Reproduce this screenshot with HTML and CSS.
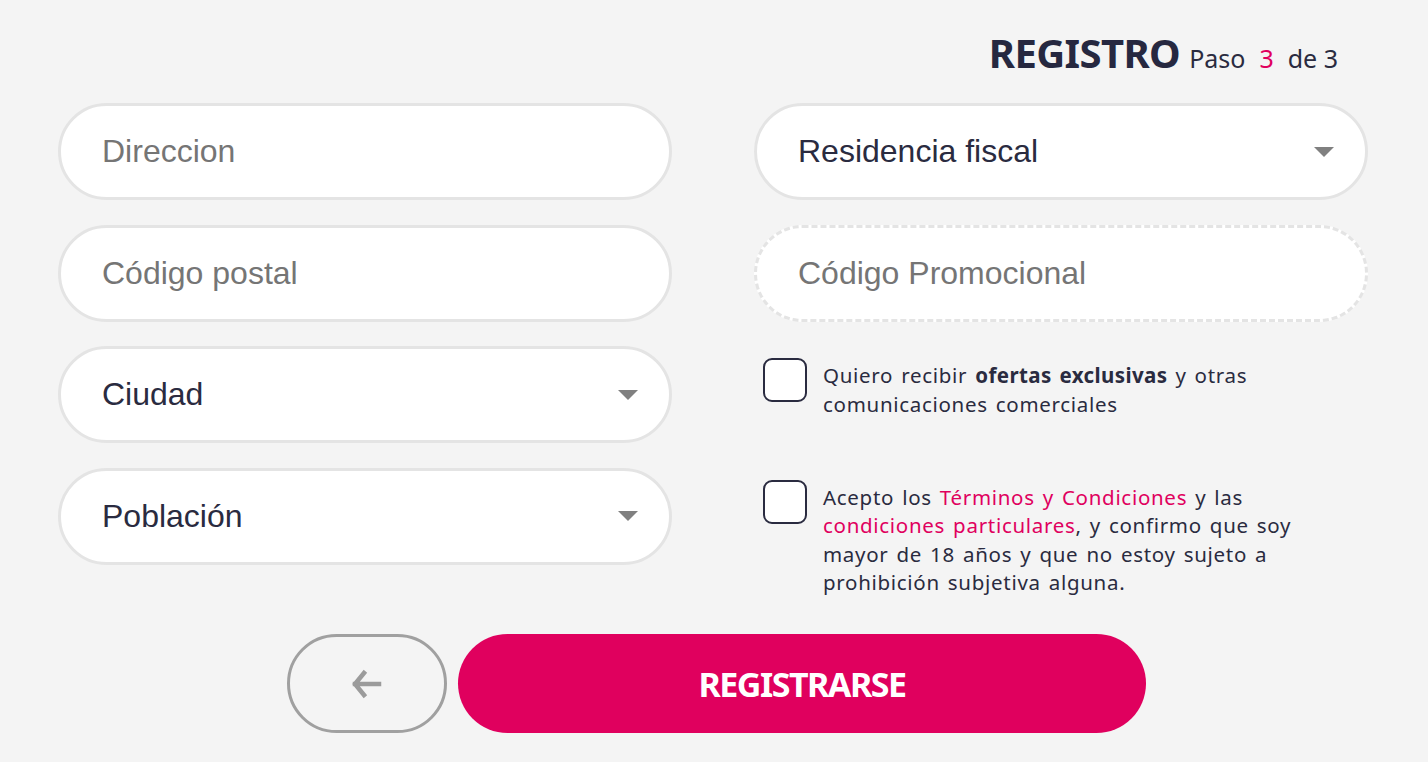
FILE: index.html
```html
<!DOCTYPE html>
<html lang="es">
<head>
<meta charset="utf-8">
<title>Registro</title>
<link rel="stylesheet" href="styles.css">
</head>
<body>
<div class="page">
  <header class="head">
    <h1 class="title">REGISTRO</h1>
    <span class="step">Paso <span class="step-num">3</span> de 3</span>
  </header>
  <div class="form-grid">
    <div class="col">
      <div class="field"><span class="placeholder">Direccion</span></div>
      <div class="field"><span class="placeholder">Código postal</span></div>
      <div class="field select"><span class="value">Ciudad</span><span class="caret"></span></div>
      <div class="field select"><span class="value">Población</span><span class="caret"></span></div>
    </div>
    <div class="col">
      <div class="field select"><span class="value">Residencia fiscal</span><span class="caret"></span></div>
      <div class="field dashed"><span class="placeholder">Código Promocional</span></div>
      <label class="check check-first">
        <span class="box"></span>
        <span class="check-text"><span>Quiero recibir </span><b>ofertas exclusivas</b><span> y otras</span><br><span>comunicaciones comerciales</span></span>
      </label>
      <label class="check check-second">
        <span class="box"></span>
        <span class="check-text"><span>Acepto los </span><a class="link">Términos y Condiciones</a><span> y las</span><br><a class="link">condiciones particulares</a><span>, y confirmo que soy</span><br><span>mayor de 18 años y que no estoy sujeto a</span><br><span>prohibición subjetiva alguna.</span></span>
      </label>
    </div>
  </div>
  <div class="actions">
    <button class="btn-back" type="button" aria-label="Atrás">
      <svg width="32" height="30" viewBox="0 0 32 30"><path d="M29 15H5M14 4L5 15l9 11" fill="none" stroke="#9b9b9b" stroke-width="4.5" stroke-linecap="square" stroke-linejoin="miter"/></svg>
    </button>
    <button class="btn-submit" type="button">REGISTRARSE</button>
  </div>
</div>
</body>
</html>
```

FILE: styles.css
```css
* { box-sizing: border-box; }
html, body { margin: 0; padding: 0; }
body {
  background: #f4f4f4;
  width: 1428px;
  height: 762px;
  overflow: hidden;
  font-family: "Noto Sans", "Open Sans", sans-serif;
  color: #2a2b40;
}
.page {
  padding: 30px 60px 0 58px;
}
.head {
  display: flex;
  justify-content: flex-end;
  align-items: baseline;
  gap: 9px;
  padding-right: 30px;
  height: 73px;
}
.title {
  margin: 0;
  font-size: 40px;
  font-weight: 700;
  letter-spacing: -0.6px;
  line-height: 46px;
  color: #262840;
}
.step {
  font-size: 25px;
  color: #2a2b40;
}
.step-num {
  color: #e0005e;
  margin: 0 7.5px;
}
.form-grid {
  display: grid;
  grid-template-columns: 614px 614px;
  column-gap: 82px;
}
.col {
  display: flex;
  flex-direction: column;
  gap: 24.5px;
}
.field {
  height: 97px;
  border: 3px solid #e4e4e4;
  border-radius: 50px;
  background: #fff;
  display: flex;
  align-items: center;
  justify-content: space-between;
  padding: 0 31px 0 41px;
  font-family: "Liberation Sans", Arial, sans-serif;
  font-size: 32px;
}
.field.dashed { border-style: dashed; }
.placeholder { color: #757575; }
.value { color: #2a2b40; }
.caret {
  width: 0;
  height: 0;
  border-left: 10px solid transparent;
  border-right: 10px solid transparent;
  border-top: 10px solid #808080;
}
.check {
  display: flex;
  align-items: flex-start;
  gap: 16px;
  padding-left: 9px;
}
.check-first { margin-top: 12px; }
.check-second { margin-top: 37px; }
.box {
  flex: 0 0 auto;
  width: 44px;
  height: 44px;
  border: 2px solid #2a2b40;
  border-radius: 9px;
  background: #fff;
}
.check-text {
  margin-top: 3px;
  font-size: 20.5px;
  line-height: 28.6px;
  letter-spacing: 0.7px;
  word-spacing: 2px;
  color: #2a2b40;
  white-space: nowrap;
}
.check-text b { font-weight: 700; letter-spacing: 0.4px; }
.link { color: #e0005e; text-decoration: none; }
.actions {
  display: flex;
  justify-content: center;
  gap: 11px;
  margin-top: 37px;
  padding-left: 7px;
}
.btn-back {
  width: 160px;
  height: 99px;
  border: 3px solid #a0a0a0;
  border-radius: 50px;
  background: #f4f4f4;
  display: flex;
  align-items: center;
  justify-content: center;
  padding: 0 2px 0 0;
}
.btn-submit {
  width: 688px;
  height: 99px;
  border: none;
  border-radius: 50px;
  background: #e0005e;
  color: #fff;
  font-family: "Noto Sans", "Open Sans", sans-serif;
  font-weight: 700;
  font-size: 34px;
  letter-spacing: -1.5px;
}
```
